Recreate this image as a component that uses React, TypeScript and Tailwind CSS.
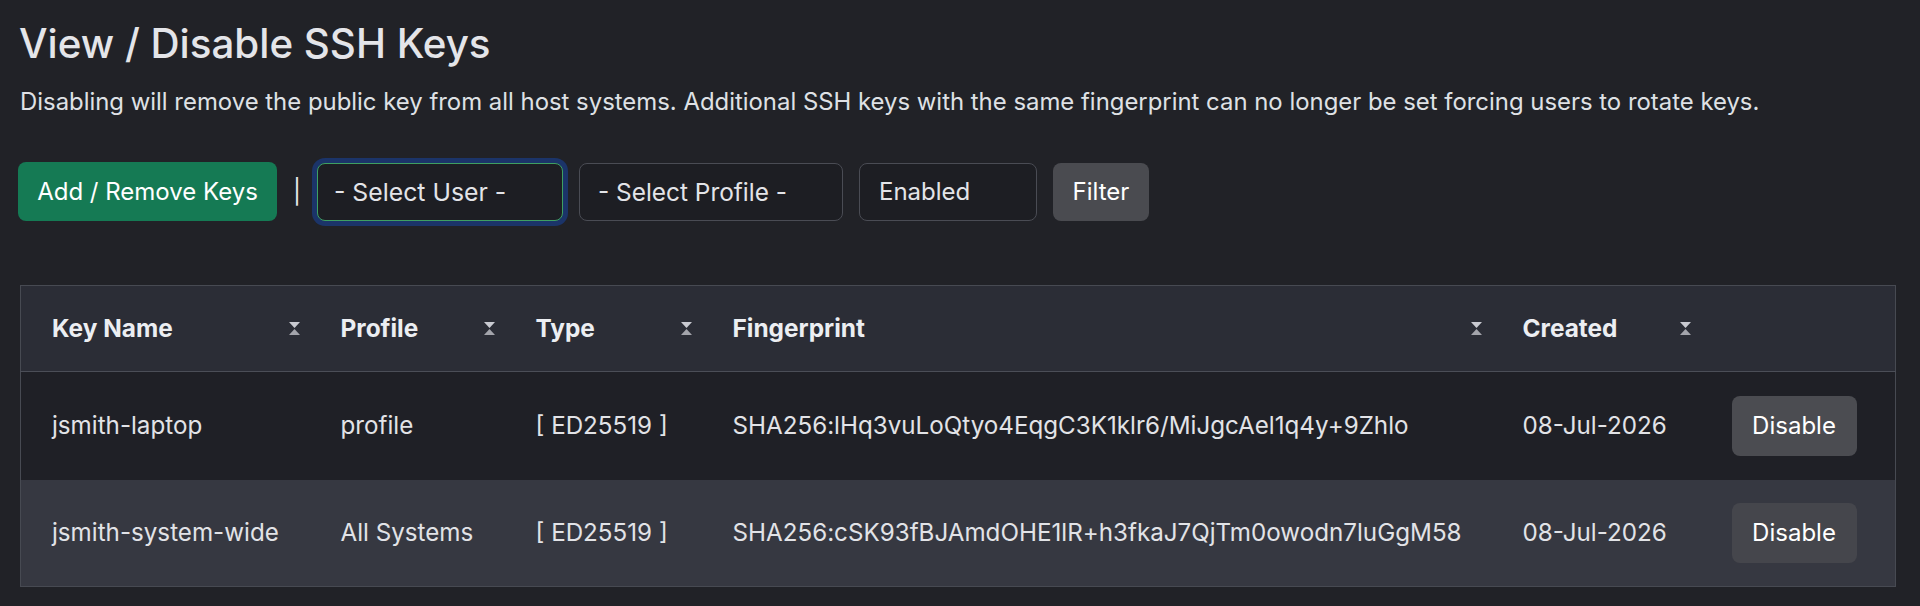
import React from "react";

function SortIcon() {
  return (
    <svg width="11" height="13" viewBox="0 0 11 13" className="shrink-0">
      <polygon points="0,0 11,0 5.5,6" fill="#c9cad1" />
      <polygon points="5.5,7 0,13 11,13" fill="#a3a4ab" />
    </svg>
  );
}

const rows = [
  {
    name: "jsmith-laptop",
    profile: "profile",
    type: "[ ED25519 ]",
    fp: "SHA256:lHq3vuLoQtyo4EqgC3K1klr6/MiJgcAel1q4y+9Zhlo",
    created: "08-Jul-2026",
  },
  {
    name: "jsmith-system-wide",
    profile: "All Systems",
    type: "[ ED25519 ]",
    fp: "SHA256:cSK93fBJAmdOHE1lR+h3fkaJ7QjTm0owodn7luGgM58",
    created: "08-Jul-2026",
  },
];

export default function App() {
  return (
    <div
      className="min-h-[606px] bg-[#212227] text-[#dee2e6] pl-[20px] pr-[25px] pt-[20px]"
      style={{ fontFamily: "Inter, 'Noto Sans', sans-serif" }}
    >
      <h1 className="text-[40.3px] font-medium leading-[47px] text-[#e4e5e9] -ml-[1px]">
        View / Disable SSH Keys
      </h1>
      <p className="text-[23.9px] leading-[34px] mt-[18px] text-[#dfe1e5] whitespace-nowrap">
        Disabling will remove the public key from all host systems. Additional SSH keys with the same fingerprint can no longer be set forcing users to rotate keys.
      </p>

      <div className="flex items-center mt-[43px] text-[24px] leading-[30px]">
        <div className="h-[59px] w-[259px] -ml-[2px] rounded-[8px] bg-[#157a54] text-white flex items-center justify-center">
          Add / Remove Keys
        </div>
        <span className="mx-[16px] text-[#e8e9ec]">|</span>
        <div className="h-[58px] w-[246px] rounded-[8px] border border-[#3ea062] bg-[#1d1e23] ring-[5px] ring-[#1b3469] flex items-center pl-[16px] text-[24.8px] text-[#e3e4e8]">
          - Select User -
        </div>
        <div className="ml-[16px] h-[58px] w-[264px] rounded-[8px] border border-[#4a4c54] bg-[#1d1e23] flex items-center pl-[18px] text-[24.4px] text-[#e3e4e8]">
          - Select Profile -
        </div>
        <div className="ml-[16px] h-[58px] w-[178px] rounded-[8px] border border-[#4a4c54] bg-[#1d1e23] flex items-center pl-[19px] text-[#e3e4e8]">
          Enabled
        </div>
        <div className="ml-[16px] h-[58px] w-[96px] rounded-[8px] bg-[#4a4b50] flex items-center justify-center text-white">
          Filter
        </div>
      </div>

      <table className="mt-[64px] w-[1876px] table-fixed border-collapse border border-[#474a52] text-[24.2px]">
        <colgroup>
          <col className="w-[289px]" />
          <col className="w-[195px]" />
          <col className="w-[197px]" />
          <col className="w-[790px]" />
          <col className="w-[209px]" />
          <col />
        </colgroup>
        <thead>
          <tr className="bg-[#2b2d36] h-[86px] border-b border-[#4b4e57]">
            {["Key Name", "Profile", "Type", "Fingerprint", "Created"].map((h) => (
              <th key={h} className="text-left font-bold text-[#eceef2] pl-[31px] pr-[10px] text-[24.4px]">
                <div className="flex items-center justify-between">
                  <span>{h}</span>
                  <SortIcon />
                </div>
              </th>
            ))}
            <th />
          </tr>
        </thead>
        <tbody>
          {rows.map((r, i) => (
            <tr key={r.name} className={i === 0 ? "bg-[#1f2026] h-[108px]" : "bg-[#363841] h-[107px]"}>
              <td className="pl-[31px] text-[#e2e3e7] whitespace-nowrap">{r.name}</td>
              <td className="pl-[31px] text-[#e2e3e7] whitespace-nowrap">{r.profile}</td>
              <td className="pl-[31px] text-[#e2e3e7] whitespace-nowrap">{r.type}</td>
              <td className="pl-[31px] text-[#e2e3e7] whitespace-nowrap">{r.fp}</td>
              <td className="pl-[31px] text-[#e2e3e7] whitespace-nowrap">{r.created}</td>
              <td className="pl-[31px]">
                <div
                  className={
                    "h-[60px] w-[125px] rounded-[8px] flex items-center justify-center text-[24px] text-white " +
                    (i === 0 ? "bg-[#4b4c51]" : "bg-[#45464c]")
                  }
                >
                  Disable
                </div>
              </td>
            </tr>
          ))}
        </tbody>
      </table>
    </div>
  );
}
